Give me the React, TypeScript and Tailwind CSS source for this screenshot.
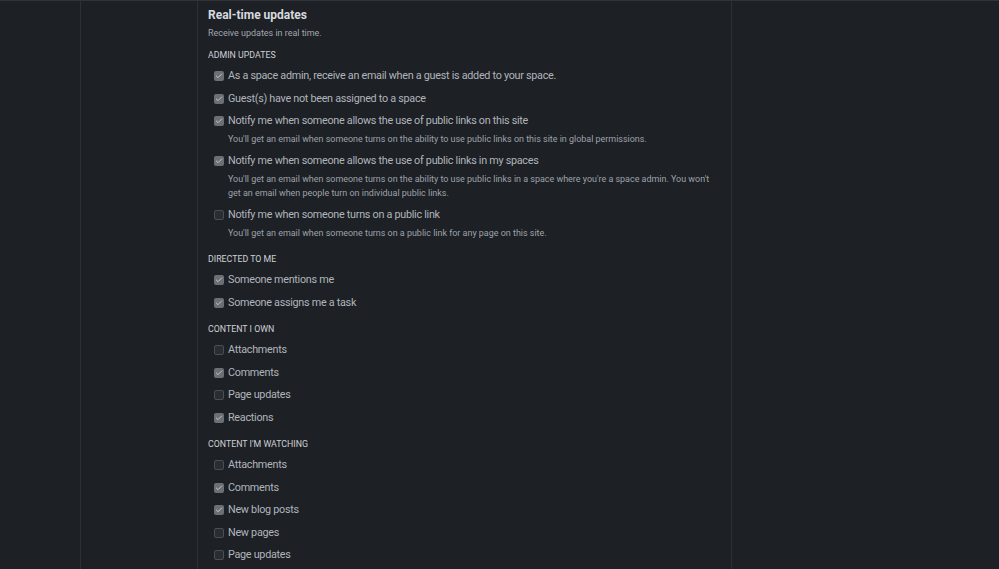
import { Check } from 'lucide-react'

type Item = { label: string; checked: boolean; desc?: string[] }
type Section = { title: string; items: Item[] }

const SECTIONS: Section[] = [
  {
    title: 'ADMIN UPDATES',
    items: [
      { label: 'As a space admin, receive an email when a guest is added to your space.', checked: true },
      { label: 'Guest(s) have not been assigned to a space', checked: true },
      {
        label: 'Notify me when someone allows the use of public links on this site',
        checked: true,
        desc: ["You'll get an email when someone turns on the ability to use public links on this site in global permissions."],
      },
      {
        label: 'Notify me when someone allows the use of public links in my spaces',
        checked: true,
        desc: [
          "You'll get an email when someone turns on the ability to use public links in a space where you're a space admin. You won't",
          'get an email when people turn on individual public links.',
        ],
      },
      {
        label: 'Notify me when someone turns on a public link',
        checked: false,
        desc: ["You'll get an email when someone turns on a public link for any page on this site."],
      },
    ],
  },
  {
    title: 'DIRECTED TO ME',
    items: [
      { label: 'Someone mentions me', checked: true },
      { label: 'Someone assigns me a task', checked: true },
    ],
  },
  {
    title: 'CONTENT I OWN',
    items: [
      { label: 'Attachments', checked: false },
      { label: 'Comments', checked: true },
      { label: 'Page updates', checked: false },
      { label: 'Reactions', checked: true },
    ],
  },
  {
    title: "CONTENT I'M WATCHING",
    items: [
      { label: 'Attachments', checked: false },
      { label: 'Comments', checked: true },
      { label: 'New blog posts', checked: true },
      { label: 'New pages', checked: false },
      { label: 'Page updates', checked: false },
    ],
  },
]

function Box({ checked }: { checked: boolean }) {
  return checked ? (
    <span className="flex h-[10px] w-[10px] shrink-0 items-center justify-center rounded-[2px] bg-[#6c6f74]">
      <Check className="h-[8px] w-[8px] text-[#c4c6c9]" strokeWidth={3} />
    </span>
  ) : (
    <span className="h-[10px] w-[10px] shrink-0 rounded-[2px] border border-[#4a4d53] bg-[#2a2d32]" />
  )
}

export default function App() {
  return (
    <div
      className="flex h-[569px] w-[999px] overflow-hidden border-t border-[#30333a] bg-[#1d2025]"
      style={{ fontFamily: 'Roboto, "Noto Sans", sans-serif' }}
    >
      <div className="w-[81px] shrink-0 border-r border-[#2c2f35]" />
      <div className="w-[116px] shrink-0" />
      <main className="w-[535px] shrink-0 border-x border-[#2c2f35] pl-[10px] pt-[5px]">
        <h2 className="text-[12px] font-bold leading-[18px] text-[#d7dadf]">Real-time updates</h2>
        <p className="mt-[2px] text-[8.95px] leading-[14px] text-[#a2a7ae]">Receive updates in real time.</p>
        {SECTIONS.map(section => (
          <section key={section.title} className="mt-[7.5px]">
            <h3 className="text-[8.8px] leading-[14px] text-[#cdd0d5]">{section.title}</h3>
            <div className="mt-[3.5px]">
              {section.items.map(item => (
                <div key={item.label}>
                  <div className="flex h-[22.5px] items-center gap-[4px] pl-[6px]">
                    <Box checked={item.checked} />
                    <span className="text-[10.8px] tracking-[-0.28px] text-[#b0b5bc]">{item.label}</span>
                  </div>
                  {item.desc && (
                    <div className="-mt-[1px] pb-[4.5px] pl-[20px] text-[8.95px] leading-[14px] text-[#9ea3aa]">
                      {item.desc.map(line => (
                        <p key={line}>{line}</p>
                      ))}
                    </div>
                  )}
                </div>
              ))}
            </div>
          </section>
        ))}
      </main>
      <div className="flex-1" />
    </div>
  )
}
